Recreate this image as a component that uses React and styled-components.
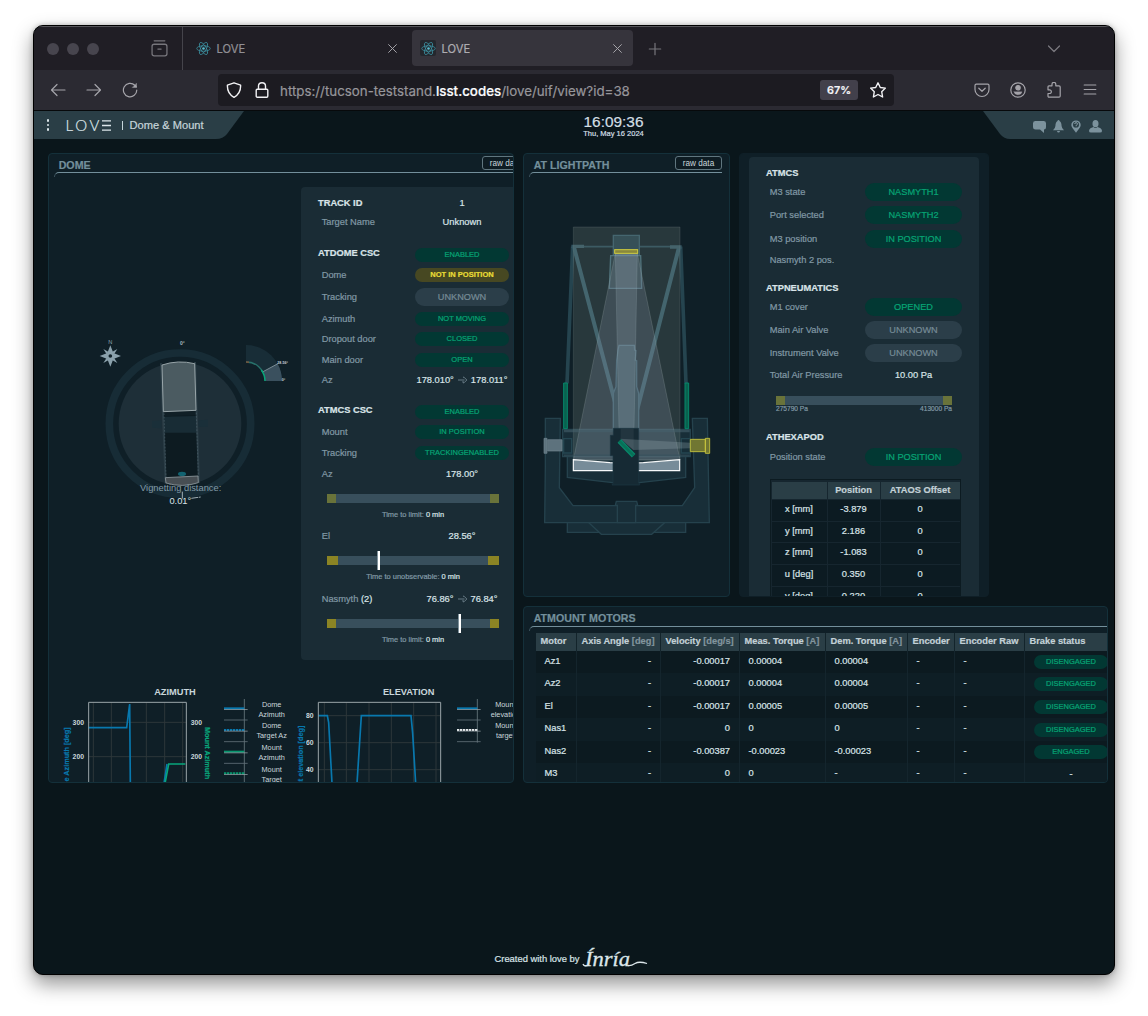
import React from "react";
import styled, { createGlobalStyle, css } from "styled-components";

const c = {
  page: "#0a161b",
  panel: "#0f1f27",
  card: "#1a2c35",
  line: "#14303a",
  tab: "#2a3e46",
  title: "#738f9b",
  label: "#8199a5",
  value: "#d9e4e8",
  green: "#07a575",
  greenBg: "#023833",
  yellow: "#e9dc35",
  track: "#384f5c",
};

const Global = createGlobalStyle`
  * { box-sizing: border-box; }
  html, body { margin: 0; padding: 0; background: #fff; }
  body { font-family: "Liberation Sans", Arial, sans-serif; height: 1016px; overflow: hidden; }
  svg { display: block; flex: none; }
`;

/* ---------- browser window ---------- */
const Desktop = styled.div`
  width: 1148px;
  height: 1016px;
  padding: 25px 0 0 33px;
  background: #fff;
`;
const Window = styled.div`
  width: 1082px;
  height: 950px;
  display: flex;
  flex-direction: column;
  border: 1px solid #000;
  border-radius: 10px;
  overflow: hidden;
  background: ${c.page};
  box-shadow: 0 9px 20px rgba(0, 0, 0, 0.42), 0 0 5px rgba(0, 0, 0, 0.25);
  -webkit-text-stroke: 0.2px;
`;
const TabStrip = styled.div`
  height: 44px;
  flex: none;
  display: flex;
  align-items: stretch;
  background: #201e25;
  border-top: 1px solid #56555a;
  font-family: Inter, "Noto Sans", sans-serif;
`;
const StripStart = styled.div`
  width: 149px;
  display: flex;
  align-items: center;
  justify-content: space-between;
  padding: 0 14px 0 13px;
  border-right: 1px solid #45444b;
`;
const Lights = styled.div`
  display: flex;
  gap: 8px;
`;
const Light = styled.i`
  width: 12px;
  height: 12px;
  border-radius: 50%;
  background: #47454e;
`;
const Tab = styled.div`
  display: flex;
  align-items: center;
  height: 36px;
  width: ${(p) => (p.$active ? 221 : 229)}px;
  margin-top: 3px;
  padding: 0 ${(p) => (p.$active ? 9 : 13)}px 0 ${(p) => (p.$active ? 8 : 12)}px;
  border-radius: 4px;
  background: ${(p) => (p.$active ? "#36343c" : "transparent")};
  color: ${(p) => (p.$active ? "#adacb1" : "#919095")};
  font-size: 11.2px;
`;
const Favicon = styled.span`
  width: 16px;
  height: 16px;
  margin-right: 5.5px;
  display: grid;
  place-items: center;
  border-radius: 2px;
  background: ${(p) => (p.$dark ? "#24272d" : "transparent")};
`;
const TabName = styled.span`
  flex: 1;
  padding-top: 2px;
`;
const StripTool = styled.span`
  display: grid;
  place-items: center;
  width: 16px;
  margin-left: ${(p) => p.$before}px;
`;
const Toolbar = styled.div`
  height: 41px;
  flex: none;
  display: flex;
  align-items: center;
  background: #2b2a32;
  border-bottom: 1px solid #07090b;
  padding: 0 16px;
`;
const NavGroup = styled.div`
  display: flex;
  gap: 20px;
  width: 168px;
`;
const UrlBar = styled.div`
  width: 676px;
  height: 32px;
  display: flex;
  align-items: center;
  padding: 0 8px;
  border-radius: 4px;
  background: #1c1b21;
  color: #97969b;
  font-family: Inter, "Noto Sans", sans-serif;
  font-size: 13.33px;
`;
const SecurityIcons = styled.div`
  display: flex;
  gap: 12px;
  width: 54px;
`;
const Url = styled.span`
  flex: 1;
  padding-top: 1px;
  white-space: nowrap;
  b { color: #fbfbfe; font-weight: 500; }
`;
const ZoomBadge = styled.span`
  width: 38px;
  height: 20px;
  margin-right: 12px;
  border-radius: 3px;
  display: grid;
  place-items: center;
  background: #42404b;
  color: #f4f4f8;
  font-size: 10.8px;
  font-weight: 600;
`;
const ActionGroup = styled.div`
  display: flex;
  gap: 20px;
  margin-left: auto;
`;

/* ---------- application header ---------- */
const AppHeader = styled.header`
  height: 28px;
  flex: none;
  display: flex;
  justify-content: space-between;
`;
const HeaderLeft = styled.div`
  width: 210px;
  padding-left: 12.5px;
  display: flex;
  align-items: center;
  background: ${c.tab};
  color: #c6d5da;
  clip-path: path("M0 0H210L193 23Q189 28 182 28H0Z");
`;
const Kebab = styled.span`
  display: grid;
  gap: 2px;
  margin-right: 16.5px;
  i { width: 2.6px; height: 2.6px; background: #dbe6ea; border-radius: 1px; }
`;
const Logo = styled.span`
  display: flex;
  align-items: center;
  font: 300 15px Lato, sans-serif;
  letter-spacing: 2.7px;
  color: #dce6ea;
  margin-right: 11px;
`;
const ViewName = styled.span`
  display: flex;
  align-items: center;
  gap: 7px;
  font-size: 11.1px;
  &::before { content: ""; width: 1px; height: 9px; background: #c6d5da; }
`;
const Clock = styled.div`
  padding-top: 3px;
  text-align: center;
  color: #d2dfe4;
`;
const Time = styled.div`
  font-size: 15.4px;
  line-height: 16px;
`;
const DateLine = styled.div`
  font-size: 7.5px;
  line-height: 8px;
`;
const HeaderRight = styled.div`
  width: 131px;
  display: flex;
  align-items: center;
  justify-content: flex-end;
  gap: 6.7px;
  padding: 3px 12px 0 0;
  background: ${c.tab};
  clip-path: path("M0 0H131V28H27Q21 28 17 23Z");
`;

/* ---------- panels ---------- */
const Board = styled.main`
  flex: 1;
  display: flex;
  align-items: flex-start;
  gap: 9px;
  padding: 14px 0 0 14px;
`;
const SideColumn = styled.div`
  display: grid;
  gap: 9px;
`;
const TopRow = styled.div`
  display: flex;
  gap: 9px;
`;
const Panel = styled.section`
  width: ${(p) => p.$w}px;
  height: ${(p) => p.$h}px;
  overflow: hidden;
  background: ${c.panel};
  border: 1px solid ${(p) => (p.$plain ? c.panel : c.line)};
  border-radius: 4px;
  ${(p) => p.$plain && css`padding: 3px 9px 0;`}
`;
const PanelHead = styled.div`
  height: 23px;
  display: flex;
  justify-content: space-between;
  padding-left: 5px;
  width: ${(p) => p.$w}px;
`;
const PanelTitle = styled.h2`
  flex: 1;
  height: 23px;
  margin: 0;
  padding: 5px 0 0 4.7px;
  font-size: 10.65px;
  line-height: 13px;
  color: ${c.title};
`;
const HeadRule = styled.div`
  height: 5px;
  margin: ${(p) => (p.$low ? -4 : -5)}px 0 0 5px;
  width: ${(p) => p.$w}px;
  border-top: 1px solid ${c.title};
  border-left: 1px solid #3c535e;
  border-top-left-radius: 5px;
`;
const RawButton = styled.button`
  width: 47px;
  height: 14px;
  margin-top: 2px;
  padding: 0;
  flex: none;
  border: 1px solid #60767f;
  border-radius: 3px;
  background: #0e1c23;
  color: #c9d6db;
  font: 8.2px/11px "Liberation Sans", Arial, sans-serif;
  -webkit-text-stroke: 0;
`;

/* ---------- summary cards ---------- */
const DomeTop = styled.div`
  display: flex;
  width: 482px;
  padding-top: 10px;
`;
const ChartArea = styled.div`
  padding-top: 22px;
`;
const Card = styled.div`
  flex: none;
  width: 230px;
  height: ${(p) => p.$h}px;
  padding: 7px 0 0 17px;
  border-radius: 4px;
  background: ${c.card};
`;
const Row = styled.div`
  display: flex;
  align-items: center;
  height: 18px;
  margin-top: ${(p) => p.$gap || 0}px;
  font-size: 9.3px;
  color: ${c.value};
`;
const RowLabel = styled.span`
  width: ${(p) => p.$w}px;
  padding-left: ${(p) => (p.$head ? 0 : 3.7)}px;
  font-weight: ${(p) => (p.$head ? 700 : 400)};
  color: ${(p) => (p.$head ? c.value : c.label)};
  white-space: nowrap;
  em { font-style: normal; color: ${c.value}; }
`;
const RowValue = styled.span`
  width: ${(p) => p.$w}px;
  display: flex;
  justify-content: center;
  align-items: center;
  gap: 3px;
  white-space: nowrap;
`;
const tones = {
  ok: css`background: ${c.greenBg}; color: ${c.green};`,
  warn: css`background: #474822; color: ${c.yellow}; font-weight: 700;`,
  idle: css`background: #2b3e49; color: #768b96;`,
};
const Pill = styled.span`
  width: 100%;
  height: ${(p) => (p.$big ? 18 : 14)}px;
  margin-top: ${(p) => (p.$drop || 0)}px;
  border-radius: 9px;
  text-align: center;
  font-size: ${(p) => (p.$big ? 9.2 : 7.5)}px;
  line-height: ${(p) => (p.$big ? 18 : 13)}px;
  ${(p) => tones[p.$tone || "ok"]}
`;
const Slider = styled.div`
  width: ${(p) => p.$w}px;
  height: 9px;
  margin: ${(p) => p.$top}px 0 0 ${(p) => p.$left}px;
  display: flex;
  align-items: center;
  justify-content: space-between;
  background: ${c.track};
`;
const Limit = styled.i`
  width: ${(p) => p.$w || 9}px;
  height: 9px;
  background: ${(p) => (p.$dim ? "#69733a" : "#8b8424")};
`;
const Needle = styled.i`
  width: 2px;
  height: 19px;
  flex: none;
  background: #fff;
  box-shadow: -1px 0 0 #7f929c;
`;
const Gap = styled.i`
  flex: ${(p) => p.$grow};
`;
const Caption = styled.div`
  width: 172px;
  margin: 6.5px 0 0 9px;
  text-align: center;
  font-size: 7.45px;
  line-height: 11px;
  color: ${c.label};
  em { font-style: normal; color: ${c.value}; }
`;
const Range = styled.div`
  display: flex;
  justify-content: space-between;
  width: 176px;
  margin-left: 10px;
  font-size: 6.6px;
  line-height: 8px;
  color: ${c.label};
`;

/* ---------- tables ---------- */
const OffsetTable = styled.div`
  display: grid;
  grid-template-columns: 55px 52px 79px;
  gap: 1px;
  width: 191px;
  margin: 13.5px 0 0 4px;
  padding: 1.5px 0 0 0.5px;
  background: #16262f;
  border: 1px solid #0c1b21;
  color: ${c.value};
  font-size: 9.3px;
  text-align: center;
`;
const OffsetHead = styled.div`
  height: 17.5px;
  line-height: 16px;
  font-weight: 700;
  background: ${c.tab};
  color: #c3d1d7;
`;
const OffsetCell = styled.div`
  height: 20.7px;
  line-height: 18px;
  background: #0c1b22;
`;
const MotorTable = styled.div`
  display: grid;
  grid-template-columns: 41px 84px 79px 86px 82px 47px 70px 84px;
  width: 573px;
  margin: 2px 0 0 12px;
  font-size: 9.3px;
  color: ${c.value};
`;
const MotorHead = styled.div`
  height: 17.5px;
  padding-left: 4.5px;
  line-height: 16px;
  font-weight: 700;
  white-space: nowrap;
  background: ${c.tab};
  border-right: 1px solid #13242b;
  color: #c3d1d7;
  em { font-style: normal; color: #82959e; }
`;
const MotorCell = styled.div`
  height: 22.6px;
  line-height: 21.4px;
  padding: 0 9px 0 8.5px;
  text-align: ${(p) => p.$align || "left"};
  background: ${(p) => (p.$odd ? "#0c1a20" : "#0e1e25")};
  border-right: 1px solid #14252d;
`;
const BrakeCell = styled(MotorCell)`
  display: flex;
  align-items: center;
  justify-content: center;
  padding: 0 1px 0 9px;
  border-right: 0;
`;

const Footer = styled.footer`
  height: 28px;
  flex: none;
  display: flex;
  align-items: center;
  justify-content: center;
  gap: 3px;
  margin: 0 5px 0 0;
  padding-bottom: 3px;
  color: ${c.value};
  font-size: 9.4px;
`;

/* ---------- icons ---------- */
const Line = ({ children, size = 16, color = "#a5a4aa", w = 1.2 }) => (
  <svg width={size} height={size} viewBox="0 0 16 16" fill="none" stroke={color} strokeWidth={w} strokeLinecap="round" strokeLinejoin="round">
    {children}
  </svg>
);
const Atom = () => (
  <svg width="15" height="15" viewBox="-8 -8 16 16" fill="none" stroke="#3b8d9d" strokeWidth=".9">
    {[0, 60, 120].map((a) => <ellipse key={a} rx="7.2" ry="2.9" transform={`rotate(${a})`} />)}
    <circle r="1.4" fill="#58bccc" stroke="none" />
  </svg>
);
const Cross = () => <Line size={13} color="#a7a6ab"><path d="M3.2 3.2l9.6 9.6M12.8 3.2L3.2 12.8" /></Line>;
const Arrow = () => (
  <svg width="11" height="8" viewBox="0 0 11 8" fill="none" stroke="#71858f" strokeWidth=".9"><path d="M1 4H7.5M6 1.2H7L9.8 4L7 6.8H6V5" /></svg>
);

/* ---------- drawings ---------- */
const DomePlan = () => (
  <svg width="252" height="473" viewBox="-93 -399 756 1419" fontFamily="Liberation Sans" fill="none">
    <g transform="translate(91 108)">
      <path d="M0-32L9-9L32 0L9 9L0 32L-9 9L-32 0L-9-9Z" fill="#8ba1ac" />
      <path d="M-21-21L-5-12L-11-5ZM21-21L5-12L11-5ZM21 21L5 12L11 5ZM-21 21L-5 12L-11 5Z" fill="#8ba1ac" />
      <circle r="8" fill={c.panel} stroke="#8ba1ac" strokeWidth="5" />
    </g>
    <text x="91" y="71" fontSize="17" fill="#8fa3ad" textAnchor="middle">N</text>
    <text x="307" y="74" fontSize="15" fontWeight="700" fill="#a9b8bf" textAnchor="middle">0°</text>
    <circle cx="300" cy="311" r="212" stroke="#172c36" strokeWidth="23" />
    <circle cx="300" cy="311" r="184" fill="#1e2f38" />
    <path d="M244 131L257 491H357L345 127Z" fill="#0d1b21" />
    <path d="M216 303L245 301V325L216 323ZM356 301L384 299V320L356 321Z" fill="#1a2f39" />
    <path d="M250 290L351 288V338H252Z" fill="#182c35" />
    <path d="M250 275L348 271V286L251 289Z" fill="#101f26" />
    <path d="M243 130L257 491M345 126L357 488" stroke="#2c3e47" strokeWidth="6" />
    <path d="M252 280L258 472M349 278L355 470" stroke="#536872" strokeWidth="1.5" strokeDasharray="5 5" />
    <path d="M246 135Q294 119 344 131L348 271L250 275Z" fill="#4b5b61" stroke="#98a5a9" strokeWidth="3" />
    <ellipse cx="306" cy="462" rx="12" ry="6.5" fill="#126371" />
    <path d="M256 473L354 468L355 488Q307 504 258 489Z" fill="#474e53" stroke="#8f9a9f" strokeWidth="2.5" />
    <path d="M307 515V536M334 535L362 531" stroke="#bdcbd1" strokeWidth="2.5" strokeDasharray="21 2" />
    <text x="302" y="512" fontSize="28" fill="#829aa6" textAnchor="middle">Vignetting distance:</text>
    <text x="301" y="551" fontSize="28" fill={c.value} textAnchor="middle">0.01°</text>
    <g transform="translate(498 183)">
      <path d="M0-108A108 108 0 0 1 108 0H57A57 57 0 0 0 0-57Z" fill="#182d37" />
      <path d="M94.9-51.6A108 108 0 0 1 108 0H57A57 57 0 0 0 50-27.3Z" fill="#3a505e" />
      <path d="M50-27.3L94.9-51.6" stroke="#8a9ba4" strokeWidth="2.5" />
      <path d="M0-57A57 57 0 0 1 50-27.3" stroke="#28716b" strokeWidth="4" />
      <path d="M0-57A57 57 0 0 1 9-56.3" stroke="#76533a" strokeWidth="4" />
      <path d="M46-33A57 57 0 0 1 57 0" stroke="#08a67a" strokeWidth="4.5" />
      <text x="94" y="-51" fontSize="11" fontWeight="700" fill="#c6d2d7">28.56°</text>
      <text x="107" y="-1" fontSize="11" fontWeight="700" fill="#c6d2d7">0°</text>
    </g>
  </svg>
);

const LightPath = () => {
  const body = { fill: "#182e38", stroke: "#25424d", strokeWidth: 4 };
  return (
    <svg width="205" height="420" viewBox="12 -69 615 1260" fill="none">
      <path d="M142 967H497V997H142Z" {...body} />
      <path d="M205 967L244 1003H395L435 967Z" {...body} />
      <path d="M76 655H121L118 863L159 917H487L524 863L517 655H562L568 968H74L76 800Z" {...body} />
      <path d="M292 968V916H286L289 904H350L353 916H347V968Z" {...body} />
      <path d="M142 768V832L278 848H358L497 832V768Z" {...body} />
      <path d="M128 688H511V770H128Z" {...body} />
      <path d="M160 140H480" stroke="#284a56" strokeWidth="5" />
      <path d="M158 140L141 550M482 140L498 550" stroke="#25444f" strokeWidth="11" />
      <path d="M162 142L307 690M477 142L336 690" stroke="#315663" strokeWidth="12" />
      <path d="M154 139H192M450 141H485" stroke="#325460" strokeWidth="10" />
      <path d="M280 106H358V166H280Z" fill="#203c47" stroke="#335765" strokeWidth="4" />
      <path d="M272 167H362L365 265H268Z" fill="#20363f" stroke="#406673" strokeWidth="4" />
      <path d="M297 436H343L344 450L348 452L346 480L350 482V560L356 580V690H280V580L288 560L290 482L294 450Z" fill="#1c3641" stroke="#35596a" strokeWidth="4" />
      <path d="M160 81H480V780H160Z" fill="#9cac9f" fillOpacity=".18" stroke="#8b9b98" strokeOpacity=".3" strokeWidth="2" />
      <path d="M286 160H352L480 780H160Z" fill="#8494a7" fillOpacity=".24" stroke="#9cabac" strokeOpacity=".25" strokeWidth="3" />
      <path d="M286 160H352L342 690H297Z" fill="#a0b3be" fillOpacity=".22" stroke="#a5b8bd" strokeOpacity=".2" strokeWidth="3" />
      <path d="M132 693H509" stroke="#46616d" strokeOpacity=".6" strokeWidth="8" />
      <path d="M132 766H509" stroke="#37515d" strokeOpacity=".6" strokeWidth="5" />
      <path d="M131 716H155V759H131ZM484 716H511V759H484Z" fill="#172e38" stroke="#244550" strokeWidth="4" />
      <rect x="284" y="149" width="69" height="11" fill="#89883c" stroke="#d0cc3e" strokeWidth="3" />
      <path d="M131 549H142V686H131ZM495 549H506V686H495Z" fill="#09624f" stroke="#06866a" strokeWidth="3" />
      <path d="M160 779L270 788Q320 790 370 788L479 779V812H160Z" fill="#778c99" stroke="#f7f9fa" strokeWidth="3.5" />
      <path d="M280 685H356V850H359V855H276L279 850V767H271V706H280Z" fill="#162a34" stroke="#1d3742" strokeWidth="2" />
      <path d="M302 686H341V750L302 715Z" fill="#536570" fillOpacity=".2" />
      <path d="M300 716L511 728V745L340 750Z" fill="#9aabb4" fillOpacity=".28" />
      <path d="M298 723L341 767" stroke="#07886b" strokeWidth="15" />
      <path d="M298 723L341 767" stroke="#087158" strokeWidth="8" />
      <path d="M83 719H126V753H83ZM72 715H81V760H72Z" fill="#5d727d" stroke="#71858f" strokeWidth="2" />
      <path d="M511 718H556V755H511ZM556 715H569V760H556Z" fill="#707632" stroke="#cbca3e" strokeWidth="2.5" />
    </svg>
  );
};

const Legend = ({ x, items }) => (
  <g>
    <path d={`M${x + 61} 87V${items.length * 64 + 90}`} stroke="#818f95" strokeWidth="2" />
    {items.map((it, i) => {
      const y = 115 + i * 65;
      return (
        <g key={i}>
          <path d={`M${x} ${y}H${x + 61}`} stroke={it.color} strokeWidth="6" strokeDasharray={it.dash ? "7 2" : undefined} />
          <path d={`M${x} ${y + 3.5}H${x + 71}`} stroke="#a4afb3" strokeWidth="2" />
          <path d={`M${x} ${y + 35}H${x + 71}`} stroke="#627078" strokeWidth="2.5" />
          <text x={it.tx} y={y - 5} fontSize="22" fill="#cbd7dc" textAnchor="middle">{it.a}</text>
          <text x={it.tx} y={y + 25} fontSize="22" fill="#cbd7dc" textAnchor="middle">{it.b}</text>
        </g>
      );
    })}
  </g>
);

const Charts = () => (
  <svg width="464" height="100" viewBox="27 36 1392 300" fontFamily="Liberation Sans" fill="none">
    <g fontSize="27.8" fontWeight="700" fill="#c9d6db" textAnchor="middle">
      <text x="405" y="74">AZIMUTH</text>
      <text x="1106" y="74">ELEVATION</text>
    </g>
    <path d="M160 97V340M214 97V340M319 97V340M374 97V340M428 97V340M146 157H439M146 260H439" stroke="#2d373a" strokeWidth="3" />
    <path d="M853 97V340M919 97V340M987 97V340M1054 97V340M1121 97V340M1188 97V340M835 137H1202M835 218H1202M835 299H1202" stroke="#2d373a" strokeWidth="3" />
    <path d="M146 173H260L269 102L271 340" stroke="#0878ae" strokeWidth="5" />
    <path d="M372 340L381 282" stroke="#0878ae" strokeWidth="5" />
    <path d="M375 340L386 282H436" stroke="#08a67c" strokeWidth="5" />
    <path d="M835 137H862L866 158L876 340M951 340L964 137H1113L1118 190L1127 340" stroke="#0878ae" strokeWidth="5" />
    <path d="M146 340V97H439V340M835 340V97H1202V340" stroke="#9ba5a9" strokeWidth="3" />
    <g fontSize="20.5" fill="#c9d6db" fontWeight="700">
      <text x="132" y="164" textAnchor="end">300</text>
      <text x="132" y="267" textAnchor="end">200</text>
      <text x="452" y="164">300</text>
      <text x="452" y="267">200</text>
      <text x="821" y="144" textAnchor="end">80</text>
      <text x="821" y="225" textAnchor="end">60</text>
      <text x="821" y="306" textAnchor="end">40</text>
    </g>
    <g fontSize="21.8" fontWeight="700" strokeWidth=".6">
      <text transform="translate(88 172) rotate(-90)" textAnchor="end" fill="#0878ae" stroke="#0878ae">Dome Azimuth [deg]</text>
      <text transform="translate(496 171) rotate(90)" fill="#08a67c" stroke="#08a67c">Mount Azimuth</text>
      <text transform="translate(788 167) rotate(-90)" textAnchor="end" fill="#0878ae" stroke="#0878ae">Mount elevation [deg]</text>
    </g>
    <Legend x={552} items={[
      { a: "Dome", b: "Azimuth", color: "#0878ae", tx: 695 },
      { a: "Dome", b: "Target Az", color: "#0878ae", dash: true, tx: 695 },
      { a: "Mount", b: "Azimuth", color: "#08966f", tx: 695 },
      { a: "Mount", b: "Target", color: "#08966f", dash: true, tx: 695 },
    ]} />
    <Legend x={1251} items={[
      { a: "Mount", b: "elevation", color: "#0878ae", tx: 1396 },
      { a: "Mount", b: "target", color: "#e5eaec", dash: true, tx: 1396 },
    ]} />
  </svg>
);

/* ---------- data ---------- */
const domeRows = [
  { l: "TRACK ID", head: true, v: "1" },
  { l: "Target Name", v: "Unknown", gap: 1 },
  { l: "ATDOME CSC", head: true, pill: "ENABLED", gap: 13, drop: 4 },
  { l: "Dome", pill: "NOT IN POSITION", tone: "warn", gap: 4 },
  { l: "Tracking", pill: "UNKNOWN", tone: "idle", big: true, gap: 4 },
  { l: "Azimuth", pill: "NOT MOVING", gap: 3.5 },
  { l: "Dropout door", pill: "CLOSED", gap: 2 },
  { l: "Main door", pill: "OPEN", gap: 3 },
  { l: "Az", v: "178.010°", to: "178.011°", gap: 2 },
  { l: "ATMCS CSC", head: true, pill: "ENABLED", gap: 12.5, drop: 4 },
  { l: "Mount", pill: "IN POSITION", gap: 4 },
  { l: "Tracking", pill: "TRACKINGENABLED", gap: 2.5 },
  { l: "Az", v: "178.00°", gap: 3 },
];
const lightRows = [
  { l: "ATMCS", head: true },
  { l: "M3 state", pill: "NASMYTH1", gap: 1 },
  { l: "Port selected", pill: "NASMYTH2", gap: 5 },
  { l: "M3 position", pill: "IN POSITION", gap: 6 },
  { l: "Nasmyth 2 pos.", gap: 3 },
  { l: "ATPNEUMATICS", head: true, gap: 9.5 },
  { l: "M1 cover", pill: "OPENED", gap: 1.5 },
  { l: "Main Air Valve", pill: "UNKNOWN", tone: "idle", gap: 5 },
  { l: "Instrument Valve", pill: "UNKNOWN", tone: "idle", gap: 5 },
  { l: "Total Air Pressure", v: "10.00 Pa", gap: 3.5 },
];
const offsets = [
  ["x [mm]", "-3.879", "0"],
  ["y [mm]", "2.186", "0"],
  ["z [mm]", "-1.083", "0"],
  ["u [deg]", "0.350", "0"],
  ["v [deg]", "0.220", "0"],
];
const motors = [
  ["Az1", "-", "-0.00017", "0.00004", "0.00004", "DISENGAGED"],
  ["Az2", "-", "-0.00017", "0.00004", "0.00004", "DISENGAGED"],
  ["El", "-", "-0.00017", "0.00005", "0.00005", "DISENGAGED"],
  ["Nas1", "-", "0", "0", "0", "DISENGAGED"],
  ["Nas2", "-", "-0.00387", "-0.00023", "-0.00023", "ENGAGED"],
  ["M3", "-", "0", "0", "-", "-"],
];
const motorHeads = [
  ["Motor"], ["Axis Angle", "[deg]"], ["Velocity", "[deg/s]"], ["Meas. Torque", "[A]"],
  ["Dem. Torque", "[A]"], ["Encoder"], ["Encoder Raw"], ["Brake status"],
];

const SummaryRow = ({ row, labelW, valueW, big }) => (
  <Row $gap={row.gap}>
    <RowLabel $w={labelW} $head={row.head}>{row.l}{row.extra && <em> {row.extra}</em>}</RowLabel>
    <RowValue $w={valueW}>
      {row.pill && <Pill $tone={row.tone} $big={big || row.big} $drop={row.drop}>{row.pill}</Pill>}
      {row.v}
      {row.to && <><Arrow />{row.to}</>}
    </RowValue>
  </Row>
);

export default function App() {
  return (
    <Desktop>
      <Global />
      <Window>
        <TabStrip>
          <StripStart>
            <Lights><Light /><Light /><Light /></Lights>
            <Line size={17} color="#77767c"><path d="M3 .8H13M3 4H13Q15 4 15 6V13Q15 15 13 15H3Q1 15 1 13V6Q1 4 3 4ZM6.5 8.5H9.5" /></Line>
          </StripStart>
          <Tab><Favicon><Atom /></Favicon><TabName>LOVE</TabName><Cross /></Tab>
          <Tab $active><Favicon $dark><Atom /></Favicon><TabName>LOVE</TabName><Cross /></Tab>
          <StripTool $before={14}><Line color="#77767c"><path d="M8 2.3V13.7M2.3 8H13.7" /></Line></StripTool>
          <StripTool $before={383}><Line color="#7b7a80"><path d="M2.5 5L8 10.5L13.5 5" /></Line></StripTool>
        </TabStrip>
        <Toolbar>
          <NavGroup>
            <Line><path d="M15 8H1.5M7 2.5L1.5 8L7 13.5" /></Line>
            <Line><path d="M1 8H14.5M9 2.5L14.5 8L9 13.5" /></Line>
            <Line><path d="M14.8 8A6.7 6.7 0 1 1 12.8 3.3L14.3 4.8" /><path d="M14.5 1.5V5.5H10.5Z" fill="#a5a4aa" strokeWidth=".4" /></Line>
          </NavGroup>
          <UrlBar>
            <SecurityIcons>
              <Line color="#f1f1f4" w={1.4}><path d="M8 .8L14.6 3.2Q15 11.5 8 15.4Q1 11.5 1.4 3.2Z" /></Line>
              <Line color="#f1f1f4" w={1.4}><path d="M3.2 7.3H12.8Q13.8 7.3 13.8 8.3V14Q13.8 15.2 12.8 15.2H3.2Q2.2 15.2 2.2 14V8.3Q2.2 7.3 3.2 7.3ZM4.5 7V4Q4.5 .8 8 .8T11.5 4V7" /></Line>
            </SecurityIcons>
            <Url>https://tucson-teststand.<b>lsst.codes</b>/love/uif/view?id=38</Url>
            <ZoomBadge>67%</ZoomBadge>
            <Line color="#f1f1f4" w={1.4}><path d="M8 .8L10.3 5.5L15.4 6.1L11.7 9.7L12.6 15L8 12.5L3.4 15L4.3 9.7L.6 6.1L5.7 5.5Z" /></Line>
          </UrlBar>
          <ActionGroup>
            <Line><path d="M2.3 2.2H13.7Q15 2.2 15 3.5V7.5A7 7 0 0 1 1 7.5V3.5Q1 2.2 2.3 2.2ZM4.8 6.2L8 9.3L11.2 6.2" /></Line>
            <Line><circle cx="8" cy="8" r="7.2" /><circle cx="8" cy="5.7" r="2.2" fill="#a5a4aa" /><path d="M4 9.8H12Q11.5 12.8 8 12.8T4 9.8Z" fill="#a5a4aa" strokeWidth=".3" /></Line>
            <Line><path d="M2 4.8Q2 3.8 3 3.8H6V2.3A1.9 1.9 0 0 1 9.8 2.3V3.8H13Q14.2 3.8 14.2 5V14Q14.2 15.2 13 15.2H3Q2 15.2 2 14V11.5H3.5A1.8 1.8 0 0 0 3.5 7.8H2Z" /></Line>
            <Line><path d="M2.2 3H13.8M2.2 7.5H13.8M2.2 12H13.8" /></Line>
          </ActionGroup>
        </Toolbar>

        <AppHeader>
          <HeaderLeft>
            <Kebab><i /><i /><i /></Kebab>
            <Logo>LOV
              <svg width="8.5" height="11" viewBox="0 0 8.5 11" stroke="#dce6ea" strokeWidth="1.3"><path d="M0 .8H9M0 5.5H9M0 10.2H9" /></svg>
            </Logo>
            <ViewName>Dome &amp; Mount</ViewName>
          </HeaderLeft>
          <Clock><Time>16:09:36</Time><DateLine>Thu, May 16 2024</DateLine></Clock>
          <HeaderRight>
            <svg width="13" height="12" viewBox="0 0 13 12" fill="#7c929d"><path d="M2.5 0H10.5Q13 0 13 2.3V6.2Q13 8.5 11 8.5V12L7 8.5H2.5Q0 8.5 0 6.2V2.3Q0 0 2.5 0Z" /></svg>
            <svg width="11" height="13" viewBox="0 0 11 13" fill="#7c929d"><path d="M5.5 0Q6.5 0 6.5 1Q8.5 2 8.6 6Q8.8 8.5 11 10.2H0Q2.2 8.5 2.4 6Q2.5 2 4.5 1Q4.5 0 5.5 0ZM4 11H7Q6.8 12.5 5.5 12.5T4 11Z" /></svg>
            <svg width="12" height="13" viewBox="-1 0 12 13"><path d="M5 12.8L2 8.7A4.7 4.7 0 1 1 8 8.7Z" fill="#7c929d" /><circle cx="5" cy="4.7" r="3" fill={c.tab} /><path d="M3.8 4A1.3 1.2 0 1 1 5.5 5L5 5.8M4.8 7H5.3" stroke="#9cafb8" strokeWidth=".9" fill="none" /></svg>
            <svg width="13" height="13" viewBox="0 0 13 13" fill="#7c929d"><ellipse cx="6.5" cy="3.7" rx="3" ry="3.6" /><path d="M4.5 7Q6.5 9 8.5 7Q13 8 13 11Q13 12.5 11 12.5H2Q0 12.5 0 11Q0 8 4.5 7Z" /></svg>
          </HeaderRight>
        </AppHeader>

        <Board>
          <Panel $w={466} $h={630}>
            <PanelHead $w={480}><PanelTitle>DOME</PanelTitle><RawButton>raw data</RawButton></PanelHead>
            <HeadRule $w={475} />
            <DomeTop>
              <DomePlan />
              <Card $h={473}>
                {domeRows.map((r, i) => <SummaryRow key={i} row={r} labelW={97} valueW={94} />)}
                <Slider $w={172} $top={11} $left={9}><Limit $dim /><Limit $dim /></Slider>
                <Caption>Time to limit: <em>0 min</em></Caption>
                <SummaryRow row={{ l: "El", v: "28.56°", gap: 6.5 }} labelW={97} valueW={94} />
                <Slider $w={172} $top={11} $left={9}><Limit $w={11} /><Gap $grow={40} /><Needle /><Gap $grow={109} /><Limit $w={11} /></Slider>
                <Caption>Time to unobservable: <em>0 min</em></Caption>
                <SummaryRow row={{ l: "Nasmyth", extra: "(2)", v: "76.86°", to: "76.84°", gap: 7.5 }} labelW={97} valueW={94} />
                <Slider $w={172} $top={11} $left={9}><Limit /><Gap $grow={123} /><Needle /><Gap $grow={29} /><Limit /></Slider>
                <Caption>Time to limit: <em>0 min</em></Caption>
              </Card>
            </DomeTop>
            <ChartArea><Charts /></ChartArea>
          </Panel>

          <SideColumn>
            <TopRow>
              <Panel $w={207} $h={444}>
                <PanelHead $w={198}><PanelTitle>AT LIGHTPATH</PanelTitle><RawButton>raw data</RawButton></PanelHead>
                <HeadRule $w={193} />
                <LightPath />
              </Panel>
              <Panel $w={250} $h={444} $plain>
                <Card $h={470}>
                  {lightRows.map((r, i) => <SummaryRow key={i} row={r} labelW={99} valueW={97} big />)}
                  <Slider $w={176} $top={12} $left={10}><Limit $dim /><Limit $dim /></Slider>
                  <Range><span>275790 Pa</span><span>413000 Pa</span></Range>
                  <SummaryRow row={{ l: "ATHEXAPOD", head: true, gap: 15.5 }} labelW={99} valueW={97} />
                  <SummaryRow row={{ l: "Position state", pill: "IN POSITION", gap: 1.5 }} labelW={99} valueW={97} big />
                  <OffsetTable>
                    <OffsetHead /><OffsetHead>Position</OffsetHead><OffsetHead>ATAOS Offset</OffsetHead>
                    {offsets.flat().map((v, i) => <OffsetCell key={i}>{v}</OffsetCell>)}
                  </OffsetTable>
                </Card>
              </Panel>
            </TopRow>
            <Panel $w={585} $h={177}>
              <PanelHead $w={583}><PanelTitle>ATMOUNT MOTORS</PanelTitle></PanelHead>
              <HeadRule $w={578} $low />
              <MotorTable>
                {motorHeads.map(([a, u]) => <MotorHead key={a}>{a}{u && <em> {u}</em>}</MotorHead>)}
                {motors.map(([name, angle, vel, meas, dem, brake], i) => {
                  const odd = i % 2 === 0;
                  return (
                    <React.Fragment key={name}>
                      <MotorCell $odd={odd}>{name}</MotorCell>
                      <MotorCell $odd={odd} $align="right">{angle}</MotorCell>
                      <MotorCell $odd={odd} $align="right">{vel}</MotorCell>
                      <MotorCell $odd={odd}>{meas}</MotorCell>
                      <MotorCell $odd={odd}>{dem}</MotorCell>
                      <MotorCell $odd={odd}>-</MotorCell>
                      <MotorCell $odd={odd}>-</MotorCell>
                      <BrakeCell $odd={odd}>{brake === "-" ? "-" : <Pill>{brake}</Pill>}</BrakeCell>
                    </React.Fragment>
                  );
                })}
              </MotorTable>
            </Panel>
          </SideColumn>
        </Board>
        <Footer>
          Created with love by
          <svg width="66" height="24" viewBox="0 0 66 24" fill="none" stroke="#dce6ea">
            <text x="3" y="18.5" fontFamily="Liberation Serif" fontStyle="italic" fontSize="20" fill="#dce6ea" strokeWidth=".3" textLength="45" lengthAdjust="spacingAndGlyphs">Ínría</text>
            <path d="M1 17Q2 20 7 18M46 18.5Q49 19 53 16.5T65 16.5" strokeWidth="1.3" />
          </svg>
        </Footer>
      </Window>
    </Desktop>
  );
}
